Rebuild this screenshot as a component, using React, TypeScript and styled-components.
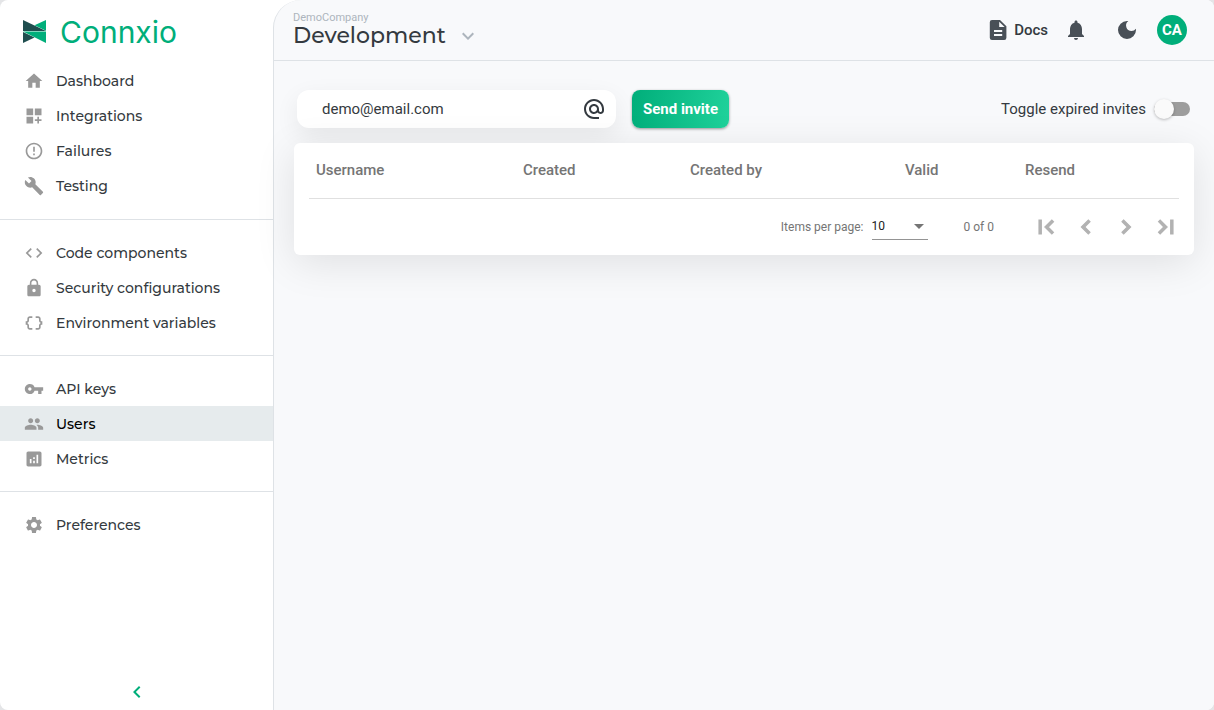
import React from "react";
import styled, { createGlobalStyle } from "styled-components";
import {
  MdHome, MdDashboardCustomize, MdErrorOutline, MdBuild, MdCode, MdLock, MdDataObject,
  MdVpnKey, MdPeople, MdAnalytics, MdSettings, MdNotifications, MdAlternateEmail, MdDarkMode,
  MdChevronLeft, MdChevronRight, MdFirstPage, MdLastPage, MdExpandMore, MdArrowDropDown,
} from "react-icons/md";
import type { IconType } from "react-icons";

const display = `Montserrat, Inter, sans-serif`;

const GlobalStyle = createGlobalStyle`
  *, *::before, *::after { box-sizing: border-box; }
  body {
    margin: 0;
    background: #e4e5e7;
    color: #343a40;
    font-family: Roboto, sans-serif;
    font-size: 15px;
    -webkit-font-smoothing: antialiased;
  }
  button, input, select { font: inherit; color: inherit; }
  button { cursor: pointer; border: 0; background: none; padding: 0; }
`;

const Shell = styled.div`
  display: grid;
  grid-template-columns: 273px minmax(0, 1fr);
  min-height: 100vh;
  background: #fff;
  border-radius: 8px;
  overflow: hidden;
`;

const Sidebar = styled.aside`
  display: flex;
  flex-direction: column;
`;

const Brand = styled.a`
  display: flex;
  align-items: center;
  gap: 14px;
  height: 63px;
  padding-left: 23px;
  color: #00ae7a;
  font: 400 30px/40px Inter, sans-serif;
  text-decoration: none;
`;

const NavGroup = styled.ul`
  list-style: none;
  margin: 0;
  padding: 0 0 15px;

  &:first-child { padding-bottom: 16px; }
  & + & {
    border-top: 1px solid #dee2e6;
    padding-top: 15px;
  }
`;

const NavLink = styled.a<{ $active?: boolean }>`
  display: flex;
  align-items: center;
  gap: 12px;
  height: 35px;
  padding-left: 24px;
  background: ${(p) => (p.$active ? "#e6ebed" : "transparent")};
  color: ${(p) => (p.$active ? "#000" : "#343a40")};
  font: 500 14px/20px ${display};
  text-decoration: none;

  svg { width: 20px; height: 20px; color: #999; }
`;

const CollapseButton = styled.button`
  display: grid;
  place-items: center;
  align-self: center;
  margin-top: auto;
  margin-bottom: 6px;
  width: 24px;
  height: 24px;
  color: #00ae7a;

  svg { width: 24px; height: 24px; }
`;

const Main = styled.main`
  background: #f8f9fb;
  border-left: 1px solid #dee2e6;
  border-top-left-radius: 28px;
`;

const TopBar = styled.header`
  display: flex;
  align-items: center;
  justify-content: space-between;
  height: 61px;
  padding: 0 27px 0 19px;
  border-bottom: 1px solid #dee2e6;
`;

const Company = styled.div`
  color: #adb5bd;
  font-size: 11px;
  line-height: 12px;
`;

const EnvironmentButton = styled.button`
  display: flex;
  align-items: center;
  gap: 10px;
  font: 500 22px/24px ${display};

  svg { width: 24px; height: 24px; color: #adb5bd; }
`;

const Actions = styled.div`
  display: flex;
  align-items: center;
`;

const DocsLink = styled.a`
  display: flex;
  align-items: center;
  gap: 4px;
  margin-right: 16px;
  color: inherit;
  font-weight: 500;
  text-decoration: none;

  svg { width: 24px; height: 24px; color: #495057; }
`;

const IconButton = styled.button`
  display: grid;
  place-items: center;
  width: 24px;
  height: 24px;
  margin-right: 27px;
  color: #495057;

  svg { width: 24px; height: 24px; }
`;

const Avatar = styled.button`
  width: 30px;
  height: 30px;
  margin-left: -9px;
  border-radius: 50%;
  background: #00ae7a;
  color: #fff;
  font-weight: 700;
`;

const Content = styled.section`
  padding: 29px 20px 0;
`;

const InviteRow = styled.form`
  display: flex;
  align-items: center;
  padding: 0 4px 0 3px;
`;

const EmailField = styled.label`
  display: flex;
  align-items: center;
  width: 319px;
  height: 38px;
  margin-right: 16px;
  padding: 0 10px 0 25px;
  border-radius: 12px;
  background: #fff;
  box-shadow: 0 8px 24px rgba(0, 0, 0, 0.07);

  input {
    flex: 1;
    min-width: 0;
    padding: 0;
    border: 0;
    outline: 0;
    background: none;
  }
  svg { width: 24px; height: 24px; }
`;

const SendButton = styled.button`
  width: 97px;
  height: 38px;
  border-radius: 8px;
  background: linear-gradient(100deg, #00ae7a, #20d29b);
  box-shadow: 0 1px 3px rgba(0, 0, 0, 0.4);
  color: #fff;
  font-weight: 700;
`;

const Toggle = styled.label`
  display: flex;
  align-items: center;
  gap: 8px;
  margin-left: auto;

  input {
    appearance: none;
    width: 36px;
    height: 14px;
    margin: 0;
    border-radius: 7px;
    background: #9d9d9d;
  }
  input::before {
    content: "";
    display: block;
    width: 20px;
    height: 20px;
    margin-top: -3px;
    border-radius: 50%;
    background: #fafafa;
    box-shadow: 0 1px 3px rgba(0, 0, 0, 0.25);
  }
  input:checked::before { margin-left: 16px; }
`;

const Card = styled.div`
  position: relative;
  margin-top: 15px;
  padding: 0 15px;
  border-radius: 6px;
  background: #fff;
  box-shadow: 0 8px 40px rgba(0, 0, 0, 0.1);
`;

const Table = styled.table`
  width: 100%;
  table-layout: fixed;
  border-collapse: collapse;

  th {
    height: 55px;
    padding: 0;
    border-bottom: 1px solid #e0e0e0;
    color: #757575;
    font-weight: 500;
    text-align: left;
  }
  th:first-child { padding-left: 7px; }
`;

const Paginator = styled.div`
  display: flex;
  align-items: center;
  justify-content: flex-end;
  height: 56px;
  color: #757575;
  font-size: 12px;
`;

const PageSize = styled.label`
  display: flex;
  align-items: center;
  gap: 8px;
  margin-right: 36px;
`;

const SelectBox = styled.span`
  display: grid;
  grid-template-columns: 1fr 18px;
  align-items: center;
  width: 56px;
  height: 26px;
  border-bottom: 1px solid #949494;

  select {
    grid-area: 1 / 1 / 2 / 3;
    appearance: none;
    width: 100%;
    padding: 0;
    border: 0;
    outline: 0;
    background: none;
    color: #212121;
  }
  svg {
    grid-area: 1 / 2;
    width: 24px;
    height: 24px;
    justify-self: center;
    pointer-events: none;
  }
`;

const PageButtons = styled.div`
  display: flex;
  margin-left: 32px;
  margin-right: -7px;
`;

const PageButton = styled.button`
  display: grid;
  place-items: center;
  width: 40px;
  height: 40px;
  color: #b2b2b2;

  svg { width: 28px; height: 28px; }
  path:not([fill="none"]) { stroke: currentColor; stroke-width: 1px; }
`;

type NavItem = { label: string; Icon: IconType; active?: boolean };

const groups: NavItem[][] = [
  [
    { label: "Dashboard", Icon: MdHome },
    { label: "Integrations", Icon: MdDashboardCustomize },
    { label: "Failures", Icon: MdErrorOutline },
    { label: "Testing", Icon: MdBuild },
  ],
  [
    { label: "Code components", Icon: MdCode },
    { label: "Security configurations", Icon: MdLock },
    { label: "Environment variables", Icon: MdDataObject },
  ],
  [
    { label: "API keys", Icon: MdVpnKey },
    { label: "Users", Icon: MdPeople, active: true },
    { label: "Metrics", Icon: MdAnalytics },
  ],
  [{ label: "Preferences", Icon: MdSettings }],
];

const columns = [
  { label: "Username", width: "24.6%" },
  { label: "Created", width: "19.2%" },
  { label: "Created by", width: "24.7%" },
  { label: "Valid", width: "13.8%" },
  { label: "Resend", width: "17.7%" },
];

const Logo = () => (
  <svg width="23" height="23" viewBox="0 0 23 23" aria-hidden="true">
    <path d="M0 0L23 11H0Z" fill="#1f4e4f" />
    <path d="M23 0V10.800L11.500 5.300Z" fill="#00ae7a" />
    <path d="M0 12V23L11.500 17.500Z" fill="#1f4e4f" />
    <path d="M0 11.600H23V23Z" fill="#00ae7a" />
  </svg>
);

const DocIcon = () => (
  <svg viewBox="0 0 24 24" fill="currentColor" aria-hidden="true">
    <path d="M14 2H6a2.200 2.200 0 0 0-2.200 2.200v15.600A2.200 2.200 0 0 0 6 22h12.200a2.200 2.200 0 0 0 2.200-2.200V8.300zM16.200 18H8v-2h8.200zm0-4H8v-2h8.200zM13.200 9V3.800L18.600 9z" />
  </svg>
);

export default function App() {
  return (
    <>
      <GlobalStyle />
      <Shell>
        <Sidebar>
          <Brand href="#"><Logo />Connxio</Brand>
          <nav aria-label="Main">
            {groups.map((items) => (
              <NavGroup key={items[0].label}>
                {items.map(({ label, Icon, active }) => (
                  <li key={label}>
                    <NavLink href="#" $active={active} aria-current={active ? "page" : undefined}>
                      <Icon />{label}
                    </NavLink>
                  </li>
                ))}
              </NavGroup>
            ))}
          </nav>
          <CollapseButton aria-label="Collapse sidebar"><MdChevronLeft /></CollapseButton>
        </Sidebar>
        <Main>
          <TopBar>
            <div>
              <Company>DemoCompany</Company>
              <EnvironmentButton>Development<MdExpandMore /></EnvironmentButton>
            </div>
            <Actions>
              <DocsLink href="#"><DocIcon />Docs</DocsLink>
              <IconButton aria-label="Notifications"><MdNotifications /></IconButton>
              <IconButton aria-label="Dark mode"><MdDarkMode /></IconButton>
              <Avatar aria-label="Account">CA</Avatar>
            </Actions>
          </TopBar>
          <Content>
            <InviteRow onSubmit={(e) => e.preventDefault()}>
              <EmailField>
                <input type="email" aria-label="Email" defaultValue="demo@email.com" />
                <MdAlternateEmail />
              </EmailField>
              <SendButton type="submit">Send invite</SendButton>
              <Toggle>
                Toggle expired invites
                <input type="checkbox" role="switch" />
              </Toggle>
            </InviteRow>
            <Card>
              <Table>
                <colgroup>
                  {columns.map((c) => <col key={c.label} style={{ width: c.width }} />)}
                </colgroup>
                <thead>
                  <tr>{columns.map((c) => <th key={c.label} scope="col">{c.label}</th>)}</tr>
                </thead>
              </Table>
              <Paginator>
                <PageSize>
                  Items per page:
                  <SelectBox>
                    <select defaultValue="10">
                      <option>10</option>
                      <option>25</option>
                      <option>50</option>
                    </select>
                    <MdArrowDropDown />
                  </SelectBox>
                </PageSize>
                <span>0 of 0</span>
                <PageButtons>
                  <PageButton aria-label="First page"><MdFirstPage /></PageButton>
                  <PageButton aria-label="Previous page"><MdChevronLeft /></PageButton>
                  <PageButton aria-label="Next page"><MdChevronRight /></PageButton>
                  <PageButton aria-label="Last page"><MdLastPage /></PageButton>
                </PageButtons>
              </Paginator>
            </Card>
          </Content>
        </Main>
      </Shell>
    </>
  );
}
